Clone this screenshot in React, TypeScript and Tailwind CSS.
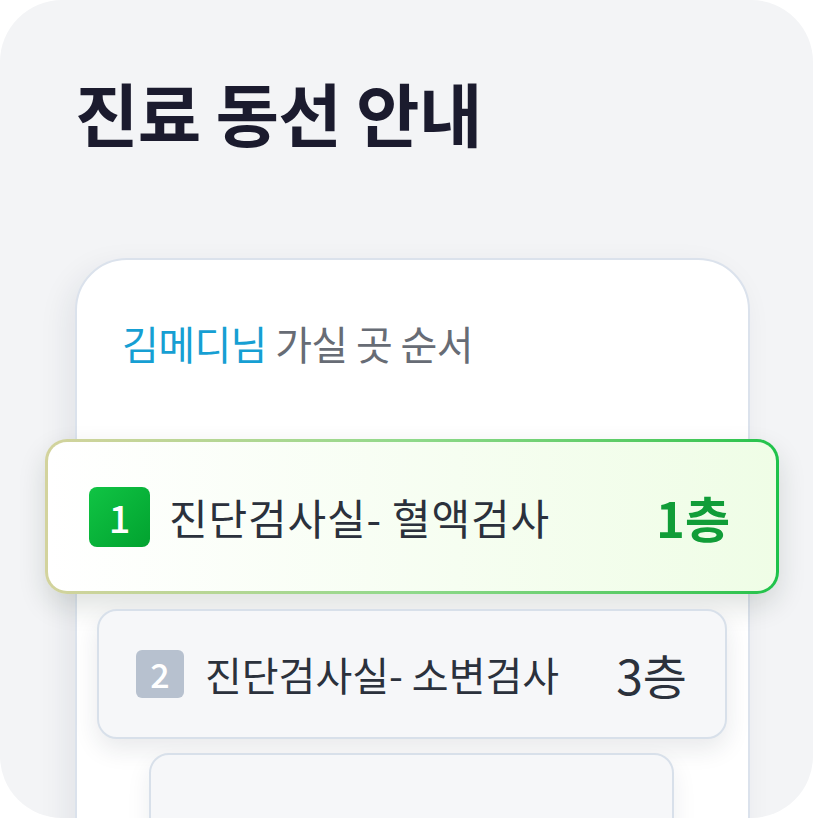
import React from "react";

const KR = { fontFamily: '"Noto Sans CJK KR", "Noto Sans", sans-serif' };

export default function App() {
  return (
    <div className="w-[813px] h-[818px] bg-white" style={KR}>
      <div className="h-full rounded-[62px] bg-[#f3f4f6] overflow-hidden pt-[78px] pl-[75px] pr-[63px]">
        <h1 className="text-[69px] font-bold leading-none tracking-[-0.01em] text-[#1b1b2e]">
          진료 동선 안내
        </h1>
        <div className="mt-[111px] h-[600px] rounded-t-[52px] border-2 border-[#dbe2ec] bg-white shadow-[-8px_10px_30px_rgba(30,40,60,0.08)]">
          <p className="pt-[63px] pl-[45px] text-[40px] leading-none tracking-[-0.015em]">
            <span className="text-[#169fd3]">김메디님</span>
            <span className="text-[#676c75]"> 가실 곳 순서</span>
          </p>
          <div className="mt-[76px] -ml-[32px] -mr-[31px] rounded-[22px] p-[3px] bg-gradient-to-r from-[#d3d39d] via-[#8fd98a] to-[#1cc24a] shadow-[0_12px_28px_rgba(20,40,30,0.14)]">
            <div className="h-[149px] rounded-[19px] bg-gradient-to-r from-white to-[#effde6] flex items-center pl-[41px] pr-[46px]">
              <div className="w-[61px] h-[60px] rounded-[8px] bg-gradient-to-br from-[#10c444] to-[#02a22f] flex items-center justify-center text-white text-[38px] font-medium leading-none">
                1
              </div>
              <span className="ml-[19px] text-[42px] leading-none tracking-[0.02em] text-[#2b313c]">
                진단검사실- 혈액검사
              </span>
              <span className="ml-auto text-[49px] font-bold leading-none text-[#119d38]">
                1층
              </span>
            </div>
          </div>
          <div className="mt-[15px] ml-[20px] mr-[21px] h-[130px] rounded-[20px] border-2 border-[#d8e0ea] bg-[#f6f7f9] shadow-[0_10px_24px_rgba(30,40,60,0.10)] flex items-center pl-[37px] pr-[38px]">
            <div className="w-[48px] h-[48px] rounded-[6px] bg-[#b7c1cf] flex items-center justify-center text-white text-[34px] font-medium leading-none">
              2
            </div>
            <span className="ml-[21px] text-[40px] leading-none text-[#2b313c]">
              진단검사실- 소변검사
            </span>
            <span className="ml-auto text-[48px] leading-none text-[#2b313c]">
              3층
            </span>
          </div>
          <div className="mt-[14px] ml-[72px] mr-[74px] h-[120px] rounded-t-[20px] border-2 border-[#d8e0ea] bg-[#f6f7f9] shadow-[0_10px_24px_rgba(30,40,60,0.08)]" />
        </div>
      </div>
    </div>
  );
}
